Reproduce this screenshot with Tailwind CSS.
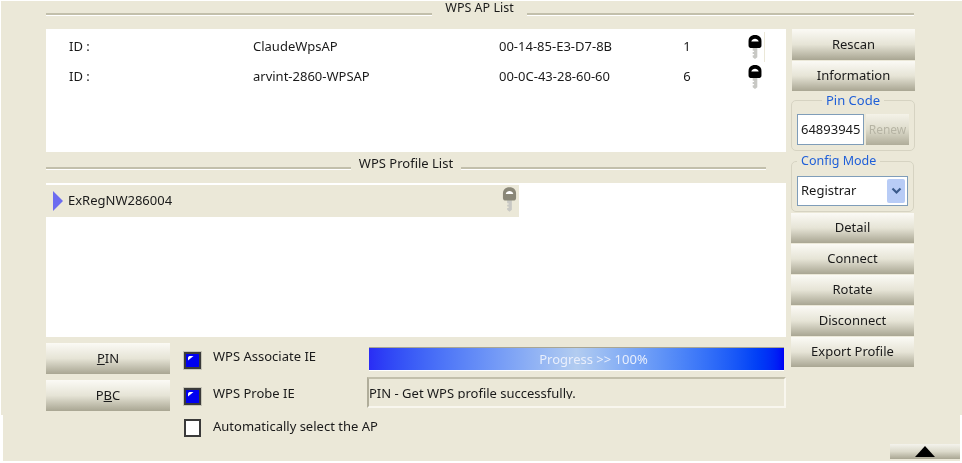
<!DOCTYPE html>
<html>
<head>
<meta charset="utf-8">
<script src="https://cdn.jsdelivr.net/npm/@tailwindcss/browser@4"></script>
</head>
<body class="bg-white">
<svg class="hidden" width="0" height="0">
  <symbol id="key" viewBox="0 0 16 26">
    <path d="M5.500 12h5v12l-2.500 2-2.500-2v-2h1.500v-1.500H5.500v-2h1.500V17H5.500z" fill="#c8c8c4"/>
    <path d="M8 0C3.500 0 1 2.800 1 6.500V11.500c0 1.200 .5 2.500 2 2.500h10c1.500 0 2-1.300 2-2.500V6.500C15 2.800 12.500 0 8 0z" fill="currentColor"/>
    <path d="M4 7C4.500 5 6.300 4 8 4s3.500 1 4 3z" fill="#fff"/>
  </symbol>
</svg>
<div class="relative w-[962px] h-[463px] overflow-hidden bg-white font-['Noto_Sans',sans-serif] text-[13px] text-[#1a1a1a] blur-[0.35px]">
  <div class="absolute left-[1px] top-[1px] w-[961px] h-[414px] bg-[#ebe8d8]"></div>
  <div class="absolute left-[3px] top-[415px] w-[957px] h-[46px] bg-[#ebe8d8]"></div>

  <div class="relative pl-[46px]">
    <div class="flex w-[868px] h-[29px]">
      <span class="w-[386px] h-[3px] mt-[13px] border-t-2 border-b border-t-[#c2bfab] border-b-white"></span>
      <span class="w-[95px] text-center leading-[16px] text-[12.5px]">WPS AP List</span>
      <span class="flex-1 h-[3px] mt-[13px] border-t-2 border-b border-t-[#c2bfab] border-b-white"></span>
    </div>

    <div class="flex gap-[5px]">
      <div class="w-[740px]">
        <div class="h-[123px] bg-white pt-[3px]">
          <div class="grid grid-cols-[184px_246px_170px_36px_42px_18px] h-[30px] items-center pl-[23px]">
            <span>ID :</span><span>ClaudeWpsAP</span><span>00-14-85-E3-D7-8B</span><span class="text-center">1</span><span></span>
            <span class="flex w-[18px] h-[30px] border-r border-r-[#ebe8d8]">
              <svg class="w-[16px] h-[24px] mt-[3px] text-black"><use href="#key"/></svg>
            </span>
          </div>
          <div class="grid grid-cols-[184px_246px_170px_36px_42px_18px] h-[30px] items-center pl-[23px]">
            <span>ID :</span><span>arvint-2860-WPSAP</span><span>00-0C-43-28-60-60</span><span class="text-center">6</span><span></span>
            <span class="flex w-[18px] h-[30px]">
              <svg class="w-[16px] h-[24px] mt-[3px] text-black"><use href="#key"/></svg>
            </span>
          </div>
        </div>

        <div class="flex h-[31px] w-[720px]">
          <span class="w-[305px] h-[3px] mt-[15px] border-t-2 border-b border-t-[#c2bfab] border-b-white"></span>
          <span class="w-[110px] text-center leading-[22px]">WPS Profile List</span>
          <span class="flex-1 h-[3px] mt-[15px] border-t-2 border-b border-t-[#c2bfab] border-b-white"></span>
        </div>

        <div class="h-[154px] bg-white pt-[2px]">
          <div class="flex items-center w-[473px] h-[32px] bg-[#ebe8d8] pl-[7px]">
            <span class="w-0 h-0 border-y-[10px] border-y-transparent border-l-[10px] border-l-[#6c6cf0]"></span>
            <span class="ml-[5px] flex-1">ExRegNW286004</span>
            <svg class="w-[15px] h-[25px] mr-[2px] -mt-[4px] text-[#8a8778]"><use href="#key"/></svg>
          </div>
        </div>

        <div class="flex pt-[6px]">
          <div class="flex flex-col gap-[6px] w-[138px]">
            <button class="w-[124px] h-[31px] bg-linear-to-b from-[#fbfaf5] via-[#e6e4d6] to-[#a9a693] text-center">
              <span class="underline">P</span>IN
            </button>
            <button class="w-[124px] h-[31px] bg-linear-to-b from-[#fbfaf5] via-[#e6e4d6] to-[#a9a693] text-center">
              P<span class="underline">B</span>C
            </button>
          </div>
          <div class="w-[185px]">
            <div class="flex items-center gap-[12px] h-[28px]">
              <span class="relative w-[17px] h-[17px] mt-[6px] border-2 border-[#3a3a3a] bg-[#0000f0] outline outline-[#c8c6b8]">
                <svg class="absolute left-[1px] top-[1px]" width="7" height="6" viewBox="0 0 7 6"><path d="M1 5.500V3C1 1.500 2 1 3.500 1H6.500z" fill="#fff"/></svg>
              </span>
              <span>WPS Associate IE</span>
            </div>
            <div class="flex items-center gap-[12px] h-[28px] mt-[9px]">
              <span class="relative w-[17px] h-[17px] mt-[5px] border-2 border-[#3a3a3a] bg-[#0000f0] outline outline-[#c8c6b8]">
                <svg class="absolute left-[1px] top-[1px]" width="7" height="6" viewBox="0 0 7 6"><path d="M1 5.500V3C1 1.500 2 1 3.500 1H6.500z" fill="#fff"/></svg>
              </span>
              <span>WPS Probe IE</span>
            </div>
            <div class="flex items-center gap-[12px] h-[20px] mt-[9px] w-[300px]">
              <span class="w-[17px] h-[18px] mt-[2px] border-2 border-[#3a3a3a] bg-white"></span>
              <span>Automatically select the AP</span>
            </div>
          </div>
          <div class="w-[417px] -ml-[2px]">
            <div class="ml-[2px] h-[24px] mt-[4px] border-t border-t-[#a8a694] border-b border-b-white bg-linear-to-r from-[#2a2cf5] via-[#b2ccf0] to-[#0000f5] text-[#e8eefc] text-center leading-[22px] pl-[34px]">Progress &gt;&gt; 100%</div>
            <div class="w-[419px] h-[31px] mt-[6px] border-2 border-t-[#c2bfab] border-l-[#b0ad9a] border-r-[#f8f6ee] border-b-[#f8f6ee]">
              <div class="h-[20px] overflow-hidden leading-[28px]">PIN - Get WPS profile successfully.</div>
            </div>
          </div>
        </div>
      </div>

      <div class="w-[124px] flex flex-col">
        <button class="ml-px w-[123px] h-[31px] bg-linear-to-b from-[#fbfaf5] via-[#e6e4d6] to-[#a9a693]">Rescan</button>
        <button class="ml-px mt-px w-[123px] h-[30px] bg-linear-to-b from-[#fbfaf5] via-[#e6e4d6] to-[#a9a693]">Information</button>

        <fieldset class="mt-[2px] w-[123px] h-[58px] border border-[#d6d3c2] rounded-[5px] px-[5px]">
          <legend class="mx-auto px-[4px] text-[#1f5fd8] leading-[14px]">Pin Code</legend>
          <div class="flex gap-[2px] mt-[7px]">
            <div class="w-[67px] h-[31px] bg-white border border-[#7f9db9] leading-[29px] pl-[3px] whitespace-nowrap overflow-hidden">64893945</div>
            <div class="w-[43px] h-[31px] bg-linear-to-b from-[#f4f2e8] via-[#dedccc] to-[#b0ad9a] text-[#b6b4a4] text-center leading-[31px] text-[12px]">Renew</div>
          </div>
        </fieldset>

        <fieldset class="mt-[3px] w-[123px] h-[58px] border border-[#d6d3c2] rounded-[5px] px-[5px]">
          <legend class="px-[4px] text-[12.5px] text-[#1f5fd8] leading-[14px]">Config Mode</legend>
          <div class="flex items-center justify-between w-[111px] h-[30px] mt-[8px] bg-white border border-[#7f9db9] pl-[3px] pr-[2px]">
            <span>Registrar</span>
            <span class="flex items-center justify-center w-[18px] h-[24px] bg-[#b8ccf6] rounded-[2px]">
              <svg width="11" height="8" viewBox="0 0 11 8"><path d="M1.500 1.500l4 4 4-4" fill="none" stroke="#3a5a8c" stroke-width="2.200"/></svg>
            </span>
          </div>
        </fieldset>

        <div class="flex flex-col gap-px mt-[1px] w-[123px]">
          <button class="h-[30px] bg-linear-to-b from-[#fbfaf5] via-[#e6e4d6] to-[#a9a693]">Detail</button>
          <button class="h-[30px] bg-linear-to-b from-[#fbfaf5] via-[#e6e4d6] to-[#a9a693]">Connect</button>
          <button class="h-[30px] bg-linear-to-b from-[#fbfaf5] via-[#e6e4d6] to-[#a9a693]">Rotate</button>
          <button class="h-[30px] bg-linear-to-b from-[#fbfaf5] via-[#e6e4d6] to-[#a9a693]">Disconnect</button>
          <button class="h-[30px] bg-linear-to-b from-[#fbfaf5] via-[#e6e4d6] to-[#a9a693]">Export Profile</button>
        </div>
      </div>
    </div>
  </div>

  <button class="absolute left-[890px] top-[444px] w-[70px] h-[15px] flex items-center justify-center bg-linear-to-b from-[#f4f3ec] via-[#dcdacb] to-[#a9a693]">
    <span class="w-0 h-0 border-x-[10px] border-x-transparent border-b-[11px] border-b-black"></span>
  </button>
</div>
</body>
</html>
